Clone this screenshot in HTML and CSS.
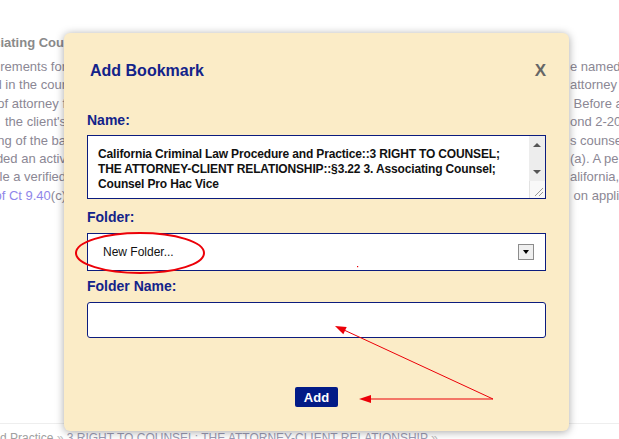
FILE: index.html
```html
<!DOCTYPE html>
<html lang="en">

<head>
    <meta charset="UTF-8">
    <meta name="viewport" content="width=device-width, initial-scale=1.0">
    <title>Add Bookmark</title>
    <link rel="stylesheet" href="styles.css">
</head>

<body>
    <div class="page">
        <div class="article">
            <div class="row heading"><span class="row-l"><span>Associating Cou</span></span><span class="row-r"></span></div>
            <div class="row"><span class="row-l"><span>requirements for</span></span><span class="row-r">e named (</span></div>
            <div class="row"><span class="row-l"><span>admitted in the cour</span></span><span class="row-r">attorney</span></div>
            <div class="row"><span class="row-l"><span>of attorney f</span></span><span class="row-r">&nbsp;Before a</span></div>
            <div class="row"><span class="row-l"><span>the client's</span></span><span class="row-r">ond 2-20</span></div>
            <div class="row"><span class="row-l"><span>standing of the ba</span></span><span class="row-r">s counse</span></div>
            <div class="row"><span class="row-l"><span>included an activ</span></span><span class="row-r">(a). A pe</span></div>
            <div class="row"><span class="row-l"><span>file a verified</span></span><span class="row-r">alifornia,</span></div>
            <div class="row"><span class="row-l"><span><a class="ref" href="#">Cal Rules of Ct 9.40</a>(c)</span></span><span class="row-r">&nbsp;on applic</span></div>
        </div>

        <div class="crumbs">
            <span>d Practice</span> <span class="sep">&raquo;</span> <a href="#">3 RIGHT TO COUNSEL; THE ATTORNEY-CLIENT RELATIONSHIP</a> <span class="sep">&raquo;</span>
        </div>
    </div>

    <div class="modal">
        <div class="modal-head">
            <h2 class="modal-title">Add Bookmark</h2>
            <span class="modal-close">X</span>
        </div>

        <div class="label label-first">Name:</div>
        <div class="note-box">
            <div class="note-text">California Criminal Law Procedure and Practice::3 RIGHT TO COUNSEL; THE ATTORNEY-CLIENT RELATIONSHIP::§3.22 3. Associating Counsel; Counsel Pro Hac Vice</div>
            <div class="note-bar">
                <div class="note-track">
                    <span class="arrow-up"></span>
                    <span class="arrow-down"></span>
                </div>
                <div class="note-grip">
                    <svg width="15" height="16" viewBox="0 0 15 16">
                        <path d="M5 14 L13 6 M9 14 L13 10" stroke="#999" stroke-width="1" fill="none" />
                    </svg>
                </div>
            </div>
        </div>

        <div class="label label-gap">Folder:</div>
        <div class="select-box">
            <span>New Folder...</span>
            <span class="select-btn"><span class="arrow-down dark"></span></span>
        </div>

        <div class="label label-gap2">Folder Name:</div>
        <div class="name-input"></div>

        <button class="add-btn">Add</button>
    </div>

    <svg class="marks" width="619" height="439" viewBox="0 0 619 439">
        <ellipse cx="140" cy="253" rx="64" ry="20" fill="none" stroke="#ec0008" stroke-width="2" />
        <line x1="493" y1="399" x2="344" y2="330" stroke="#ec0008" stroke-width="1" />
        <polygon points="335,326 346.7,327 343.3,334.2" fill="#ec0008" />
        <line x1="493" y1="399" x2="370" y2="399" stroke="#ec0008" stroke-width="1.2" />
        <polygon points="359,399 371,395 371,403" fill="#ec0008" />
        <rect x="357" y="266" width="1.2" height="1.2" fill="#ec0008" />
    </svg>
</body>

</html>
```

FILE: styles.css
```css
body {
    margin: 0;
    font-family: "Liberation Sans", Arial, sans-serif;
    background-color: #fff;
}

.page {
    position: relative;
    height: 439px;
    overflow: hidden;
    display: flex;
    flex-direction: column;
}

.article {
    padding-top: 34px;
    font-size: 13px;
    color: #8b8794;
}

.row {
    display: flex;
    justify-content: space-between;
    height: 18.4px;
    line-height: 18.4px;
    white-space: nowrap;
}

.row.heading {
    font-weight: bold;
    color: #8a8a8a;
    margin-bottom: 5.6px;
}

.row-l {
    width: 66px;
    display: flex;
    justify-content: flex-end;
    overflow: hidden;
}

.row.heading .row-l {
    width: 64px;
}

.row-l > span {
    flex-shrink: 0;
}

.row-r {
    width: 49px;
    overflow: hidden;
}

.ref {
    color: #8f86ea;
    text-decoration: none;
}

.crumbs {
    flex-shrink: 0;
    margin-top: auto;
    margin-bottom: -6px;
    border-top: 1px solid #eeeeee;
    padding-top: 7px;
    font-size: 12px;
    line-height: 14px;
    height: 14px;
    color: #a0a0a0;
    white-space: nowrap;
}

.crumbs a {
    color: #9c9cb4;
    text-decoration: none;
}

.crumbs .sep {
    color: #bbb;
}

/* modal */

.modal {
    position: absolute;
    left: 64px;
    top: 33px;
    width: 505px;
    height: 398px;
    box-sizing: border-box;
    padding: 28px 23px 0;
    background-color: #fbecc7;
    border-radius: 6px;
    box-shadow: 0 1px 8px rgba(0, 0, 0, 0.35);
}

.modal-head {
    display: flex;
    justify-content: space-between;
    align-items: center;
    height: 20px;
    padding-left: 3px;
}

.modal-title {
    margin: 0;
    font-size: 16px;
    font-weight: bold;
    color: #13238a;
}

.modal-close {
    font-size: 17px;
    font-weight: bold;
    color: #666;
}

.label {
    font-size: 14px;
    font-weight: bold;
    line-height: 18px;
    color: #13238a;
}

.label-first {
    margin-top: 30px;
}

.label-gap {
    margin-top: 9px;
}

.label-gap2 {
    margin-top: 6px;
}

.note-box {
    margin-top: 6px;
    height: 64px;
    box-sizing: border-box;
    border: 1px solid #0c1c7e;
    background-color: #fff;
    display: flex;
}

.note-text {
    flex: 1;
    padding: 11px 10px 0;
    font-size: 12px;
    font-weight: bold;
    line-height: 15px;
    letter-spacing: -0.15px;
    color: #111;
}

.note-bar {
    width: 16px;
    display: flex;
    flex-direction: column;
}

.note-track {
    height: 45px;
    background-color: #ededed;
    display: flex;
    flex-direction: column;
    align-items: center;
    justify-content: space-between;
    padding: 7px 0 7px;
    box-sizing: border-box;
}

.note-grip {
    flex: 1;
    background-color: #f8f8f8;
    border-left: 1px solid #e2e2e2;
    display: flex;
    justify-content: flex-end;
    align-items: flex-end;
}

.note-grip svg {
    display: block;
}

.arrow-up {
    width: 0;
    height: 0;
    border-left: 4px solid transparent;
    border-right: 4px solid transparent;
    border-bottom: 4px solid #555;
}

.arrow-down {
    width: 0;
    height: 0;
    border-left: 4px solid transparent;
    border-right: 4px solid transparent;
    border-top: 4px solid #555;
}

.arrow-down.dark {
    border-left-width: 3.5px;
    border-right-width: 3.5px;
    border-top-color: #000;
}

.select-box {
    margin-top: 7px;
    height: 38px;
    box-sizing: border-box;
    border: 1px solid #0c1c7e;
    background-color: #fff;
    display: flex;
    align-items: center;
    justify-content: space-between;
    padding: 0 11px 0 15px;
    font-size: 12px;
    color: #111;
}

.select-btn {
    width: 16px;
    height: 16px;
    box-sizing: border-box;
    border: 1px solid #8c8c8c;
    background-color: #efefef;
    display: flex;
    align-items: center;
    justify-content: center;
}

.name-input {
    margin-top: 7px;
    height: 36px;
    box-sizing: border-box;
    border: 1px solid #0c1c7e;
    border-radius: 3px;
    background-color: #fff;
}

.add-btn {
    display: block;
    margin: 49px auto 0;
    width: 43px;
    height: 20px;
    padding: 0;
    border: none;
    border-radius: 2px;
    background-color: #021b87;
    color: #fff;
    font-family: "Liberation Sans", Arial, sans-serif;
    font-size: 13px;
    font-weight: bold;
}

.marks {
    position: absolute;
    left: 0;
    top: 0;
    pointer-events: none;
}
```
